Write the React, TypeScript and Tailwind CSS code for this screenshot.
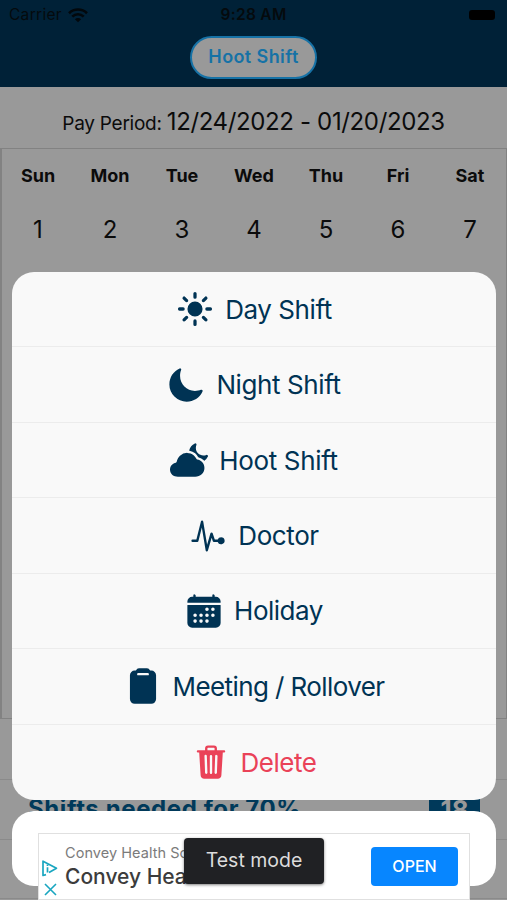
import type { ReactNode } from "react";
import {
  IoCalendar,
  IoClipboard,
  IoCloudyNight,
  IoMoon,
  IoPulse,
  IoSunny,
  IoTrash,
} from "react-icons/io5";

const DAYS = [
  { name: "Sun", date: 1 },
  { name: "Mon", date: 2 },
  { name: "Tue", date: 3 },
  { name: "Wed", date: 4 },
  { name: "Thu", date: 5 },
  { name: "Fri", date: 6 },
  { name: "Sat", date: 7 },
];

type Action = {
  label: string;
  icon: ReactNode;
  tracking: string;
  danger?: boolean;
};

const ACTIONS: Action[] = [
  { label: "Day Shift", icon: <IoSunny />, tracking: "tracking-[-0.45px]" },
  { label: "Night Shift", icon: <IoMoon />, tracking: "tracking-[-0.4px]" },
  { label: "Hoot Shift", icon: <IoCloudyNight />, tracking: "tracking-[-0.35px]" },
  { label: "Doctor", icon: <IoPulse />, tracking: "tracking-[-0.4px]" },
  { label: "Holiday", icon: <IoCalendar />, tracking: "tracking-[-0.5px]" },
  { label: "Meeting / Rollover", icon: <IoClipboard />, tracking: "tracking-[-0.6px]" },
  { label: "Delete", icon: <IoTrash />, tracking: "tracking-[-0.5px]", danger: true },
];

export default function App() {
  return (
    <div className="relative h-[900px] w-[507px] overflow-hidden bg-[#999999] font-['Inter',sans-serif] text-[#0b0b0b]">
      <Header />
      <PayPeriod />
      <Calendar />
      <Totals />
      <ActionSheet />
      <AdBanner />
    </div>
  );
}

function Header() {
  return (
    <header className="h-[87px] bg-[#002137]">
      <div className="grid h-[30px] grid-cols-3 items-center px-[9px] text-[15.5px] text-[#050a0d]">
        <div className="flex items-center gap-[6px]">
          <span className="tracking-[0.3px]">Carrier</span>
          <WifiIcon />
        </div>
        <span className="text-center font-semibold tracking-[0.3px]">9:28 AM</span>
        <div className="flex justify-end pr-[3px]">
          <span className="h-[10px] w-[26px] rounded-[3px] bg-black" />
        </div>
      </div>
      <div className="flex justify-center pt-[6px]">
        <button className="h-[43px] w-[127px] rounded-full border-2 border-[#1672a6] bg-[#999999] pb-[2px] text-[18px] font-semibold tracking-[0.4px] text-[#1672a6]">
          Hoot Shift
        </button>
      </div>
    </header>
  );
}

function PayPeriod() {
  return (
    <div className="flex h-[61px] items-baseline justify-center gap-[5px] pt-[17px]">
      <span className="text-[19px] tracking-[-0.25px]">Pay Period:</span>
      <span className="text-[24px] tracking-[-0.36px]">12/24/2022 - 01/20/2023</span>
    </div>
  );
}

function Calendar() {
  return (
    <div className="h-[571px] border border-l-2 border-[#828282]">
      <div className="grid grid-cols-7">
        {DAYS.map((day) => (
          <div key={day.name} className="flex flex-col items-center">
            <span className="mt-[15px] text-[18px] leading-6 font-bold">{day.name}</span>
            <span className="mt-[26px] text-[24px] leading-8">{day.date}</span>
          </div>
        ))}
      </div>
    </div>
  );
}

function Totals() {
  return (
    <div>
      <div className="h-[61px] border-b border-[#8a8a8a]" />
      <div className="flex h-[60px] items-center justify-between border-b border-[#8a8a8a] pr-[27px] pl-[28px] font-bold">
        <span className="pb-px text-[24px] tracking-[0.6px] text-[#00395a]">Shifts needed for 70%</span>
        <span className="flex h-[34px] w-[51px] items-center justify-center rounded-[6px] bg-[#00395a] text-[26px] text-[#999999]">
          18
        </span>
      </div>
      <div className="h-[59px] border-b border-[#8a8a8a]" />
    </div>
  );
}

function ActionSheet() {
  return (
    <div className="absolute top-[272px] right-[11px] left-[12px] flex flex-col gap-[11px]">
      <div className="h-[528px] divide-y divide-[#ececec] overflow-hidden rounded-[22px] bg-[#f9f9f9]">
        {ACTIONS.map((action) => (
          <button
            key={action.label}
            className={`flex h-[75.45px] w-full items-center justify-center gap-[11px] ${
              action.danger ? "text-[#ea4258]" : "text-[#003354]"
            }`}
          >
            <span className="text-[38px]">{action.icon}</span>
            <span className={`text-[26px] ${action.tracking}`}>{action.label}</span>
          </button>
        ))}
      </div>
      <div className="h-[75px] rounded-[22px] bg-white" />
    </div>
  );
}

function AdBanner() {
  return (
    <div className="absolute top-[833px] left-[38px] flex h-[67px] w-[432px] border border-[#e0e0e0] bg-white">
      <div className="flex w-[22px] flex-col items-center gap-[6px] pt-[26px]">
        <svg width="16" height="17" viewBox="0 0 16 17" fill="none" stroke="#19a6c0" strokeWidth="1.7">
          <path d="M4 14.6 1 15.5V1.2l13.5 7L7 12.4" strokeLinejoin="round" />
          <path d="M5.5 7.2v5.2M5.5 4.4v1.5" />
        </svg>
        <svg width="13" height="13" viewBox="0 0 13 13" stroke="#19a6c0" strokeWidth="1.6">
          <path d="M1 1l11 11M12 1L1 12" />
        </svg>
      </div>
      <div className="flex flex-col pt-[8px] pl-[4px] whitespace-nowrap">
        <span className="text-[14.5px] leading-[22px] tracking-[0.05px] text-[#7b7b7b]">Convey Health So</span>
        <span className="text-[21px] leading-[25px] font-medium text-[#3c3c3c]">Convey Hea</span>
      </div>
      <div className="absolute top-[4px] left-[145px] flex h-[46px] w-[140px] items-center justify-center rounded-[4px] bg-[#202124] text-[19.5px] text-[#dcdcdc] shadow-[0_1px_3px_rgba(0,0,0,0.5)]">
        Test mode
      </div>
      <button className="mt-[13px] mr-[11px] ml-auto h-[39px] w-[87px] rounded-[4px] bg-[#0786ff] pb-[2px] text-[16px] font-medium text-white">
        OPEN
      </button>
    </div>
  );
}

function WifiIcon() {
  return (
    <svg width="20" height="15" viewBox="0 0 20 15" fill="none" stroke="#02080c" strokeWidth="2.6">
      <path d="M1 5.2C6 .3 14 .3 19 5.2" />
      <path d="M4.3 8.7c3.2-3.2 8.2-3.2 11.4 0" />
      <path d="M10 14.3 6.9 11.2a4.4 4.4 0 0 1 6.2 0Z" fill="#02080c" stroke="none" />
    </svg>
  );
}
